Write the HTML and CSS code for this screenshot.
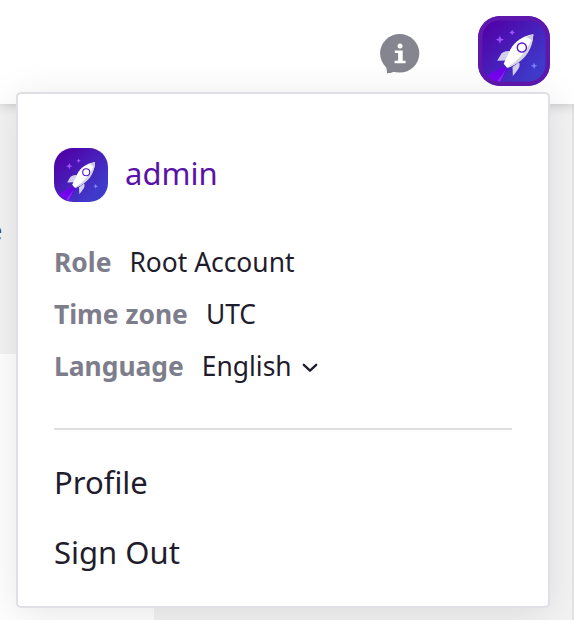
FILE: index.html
```html
<!DOCTYPE html>
<html lang="en">
<head>
<meta charset="utf-8">
<title>Account menu</title>
<link rel="stylesheet" href="styles.css">
</head>
<body>
<svg class="defs" width="0" height="0" aria-hidden="true">
  <defs>
    <linearGradient id="sky" x1="0" y1="0" x2="1" y2="1"><stop offset=".1" stop-color="#5000a6"/><stop offset=".8" stop-color="#403acb"/></linearGradient>
    <linearGradient id="flame" x1="1" y1="0" x2="0" y2="1"><stop offset="0" stop-color="#6500e0"/><stop offset=".6" stop-color="#7604f0"/><stop offset="1" stop-color="#5a18c0"/></linearGradient>
    <g id="rocket">
      <path fill="#a352ff" d="M15.3 15l.9 2.300 2.300.9-2.300.9-.9 2.300-.9-2.300-2.300-.9 2.300-.9zM24.700 10.500l.7 1.500 1.500.7-1.500.7-.7 1.500-.7-1.500-1.500-.7 1.500-.7z"/>
      <path fill="#7b86ff" d="M41.600 35.800l.7 1.800 1.800.7-1.800.7-.7 1.800-.7-1.800-1.800-.7 1.800-.7z"/>
      <path fill="url(#flame)" d="M18.500 38.500L4 46.500L14.500 54L21 41z"/>
      <path fill="#8d3cf0" opacity=".7" d="M20 41L12.500 51l1.800 2.600z"/>
      <path fill="#d3cfee" d="M23 27c-4-.2-6.400 1-7.500 3.500L13.200 34.500l7-.3zM30 35.500c1.500 3-.6 5.500-2.500 8l-2.200 2.700-.3-7z"/>
      <path fill="#fff" d="M41 14C32.500 15.500 27 19.300 23.500 25.500L18.200 36.800L20.800 39.800L23 39.300C32 35 40 27 41 14z"/>
      <path fill="#d4d4df" d="M41 14C40.700 27 33 35 23 39.300l-2.200.5C30 33.500 37.500 26 41 14z"/>
      <path fill="#cbc8df" d="M41 14l-5.600 1.900q3.300 1 5 3.800z"/>
      <circle cx="32.200" cy="24.300" r="3.500" fill="#fff" stroke="#5a14cf" stroke-width="1.100"/>
    </g>
  </defs>
</svg>
<div class="app">
  <header class="topbar">
    <svg class="info" viewBox="0 0 40 40"><g fill="#85858f"><ellipse cx="19.700" cy="19.300" rx="19.600" ry="19.300"/><path d="M3 27Q7 32 7 39.300Q11 39.500 15 37.200V27z"/></g><circle cx="20" cy="12" r="2.500" fill="#fff"/><path fill="#fff" d="M14.800 16.500h7.900v10.300h2.900v2.400h-11v-2.400h3.500v-7.900h-3.300z"/></svg>
    <svg class="avatar-lg" viewBox="0 0 72 70"><rect width="72" height="70" fill="url(#sky)"/><g transform="translate(2 0) scale(1.300)"><use href="#rocket"/></g><rect x="2.250" y="2.250" width="67.500" height="65.500" rx="19" fill="none" stroke="#5f18ad" stroke-width="4.500"/></svg>
  </header>
  <main class="page">
    <div class="strip"><span class="heading">Home</span></div>
    <div class="panel"></div>
  </main>
  <section class="menu">
    <div class="user"><svg class="avatar" viewBox="0 0 54 54"><rect width="54" height="54" fill="url(#sky)"/><use href="#rocket"/></svg><span class="name">admin</span></div>
    <dl class="facts">
      <div class="fact"><dt>Role</dt><dd>Root Account</dd></div>
      <div class="fact"><dt>Time zone</dt><dd>UTC</dd></div>
      <div class="fact"><dt>Language</dt><dd>English</dd><svg class="chevron" viewBox="0 0 16 10"><path d="M1.800 1.800L8 7.700l6.200-5.900" fill="none" stroke="#1f1c2c" stroke-width="2.300" stroke-linecap="round" stroke-linejoin="round"/></svg></div>
    </dl>
    <hr class="rule">
    <nav class="links"><a>Profile</a><a>Sign Out</a></nav>
  </section>
</div>
</body>
</html>
```
FILE: styles.css
```css
* { box-sizing: border-box; }
body { margin: 0; font-family: "Noto Sans", sans-serif; color: #1f1c2c; }
.defs { position: absolute; }
.app { position: relative; width: 574px; height: 620px; overflow: hidden; background: #f3f3f3; display: flex; flex-direction: column; }
.topbar { position: relative; flex: none; height: 104px; background: #fff; box-shadow: 0 0 12px rgba(0,0,0,.24); display: flex; justify-content: flex-end; align-items: flex-start; gap: 58px; padding: 16px 24px 0 0; }
.info { width: 40px; height: 40px; margin-top: 18px; }
.avatar-lg { width: 72px; height: 70px; border-radius: 22px; }
.page { flex: 1; border-right: 2px solid #e4e4e5; }
.strip { height: 250px; padding-top: 108px; }
.heading { display: flex; justify-content: flex-end; width: 2.500px; font-size: 26px; line-height: 36px; color: #4a4a55; white-space: nowrap; }
.panel { width: 154px; height: 266px; background: #fff; }
.menu { position: absolute; left: 16px; top: 92px; width: 534px; height: 516px; padding: 54px 36px 0; background: #fff; border: 2px solid #dfdfe5; border-radius: 5px; box-shadow: 0 6px 40px rgba(0,0,0,.1); }
.user { display: flex; align-items: center; gap: 17px; height: 54px; }
.avatar { width: 54px; height: 54px; border-radius: 19px; }
.name { font-size: 31px; line-height: 44px; color: #5a12a8; margin-top: -4px; }
.facts { margin: 34px 0 0; }
.fact { display: flex; align-items: center; height: 52px; font-size: 26.400px; line-height: 36px; }
.fact dt { font-weight: 700; color: #7d7d8c; }
.fact dd { margin: 0 0 0 18px; }
.chevron { width: 16px; height: 10px; margin: 3px 0 0 10px; }
.rule { height: 2px; margin: 36px 0 0; border: 0; background: #dfdfe2; }
.links { display: flex; flex-direction: column; padding-top: 17px; font-size: 31px; }
.links a { height: 70px; line-height: 70px; }
```
